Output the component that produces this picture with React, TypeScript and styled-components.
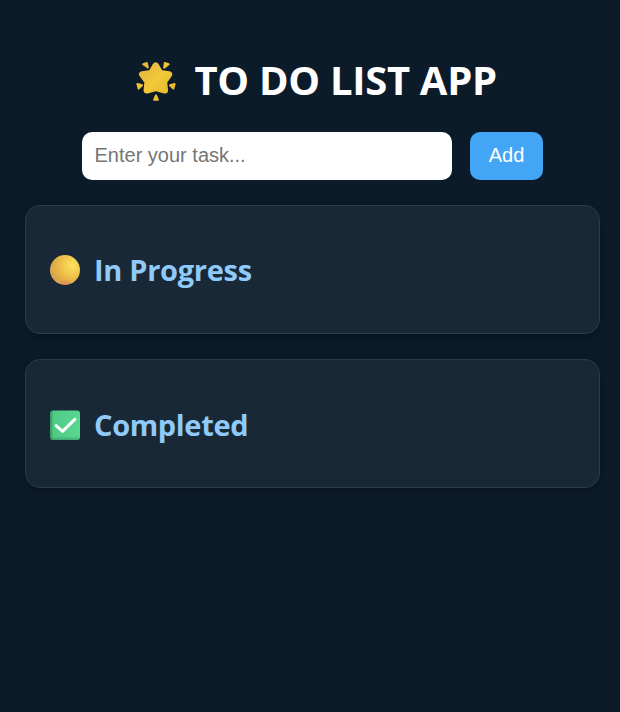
import React from "react";
import styled, { createGlobalStyle } from "styled-components";

const GlobalStyle = createGlobalStyle`
  * { box-sizing: border-box; }
  html, body { margin: 0; background: #0b1b29; }
  body { min-height: 100vh; font-family: "Open Sans", "Noto Sans", sans-serif; }
`;

const Page = styled.main`
  min-height: 100vh;
  padding: 53px 20px 0 25px;
  background: #0b1b29;
`;

const Title = styled.h1`
  display: flex;
  align-items: center;
  gap: 17.5px;
  height: 54px;
  margin: 0 0 25px 110px;
  color: #fff;
  font-size: 40px;
  font-weight: 700;
  line-height: 54px;
  white-space: nowrap;
`;

const TitleText = styled.span`
  letter-spacing: -0.3px;
`;

const TaskForm = styled.form`
  display: flex;
  justify-content: center;
  gap: 18px;
  margin-bottom: 25px;
`;

const TaskInput = styled.input`
  width: 370px;
  height: 48px;
  padding: 0 12.5px 2px;
  border: 0;
  border-radius: 10px;
  background: #fff;
  font: 20px "Liberation Sans", Arial, sans-serif;
  outline: none;
  &::placeholder { color: #757575; }
`;

const AddButton = styled.button`
  width: 73px;
  height: 48px;
  padding: 0 0 2px;
  border: 0;
  border-radius: 10px;
  background: #42a5f5;
  color: #fff;
  font: 20px "Liberation Sans", Arial, sans-serif;
`;

const Sections = styled.div`
  display: flex;
  flex-direction: column;
  gap: 25px;
`;

const Card = styled.section<{ $top?: number }>`
  display: flex;
  align-items: center;
  height: 129px;
  padding: ${(p) => p.$top ?? 0}px 24px 0;
  border: 1px solid #2e3b48;
  border-radius: 15px;
  background: #192836;
  box-shadow: 0 4px 10px rgba(0, 0, 0, 0.2);
`;

const CardTitle = styled.h2<{ $spacing: number }>`
  display: flex;
  align-items: center;
  gap: 14px;
  margin: 0;
  color: #90caf9;
  font-size: 29px;
  font-weight: 700;
  line-height: 40px;
  letter-spacing: ${(p) => p.$spacing}px;
`;

const StarIcon = () => (
  <svg width="42" height="42" viewBox="0 0 42 42">
    <defs>
      <linearGradient id="star" gradientUnits="userSpaceOnUse" x1="4" y1="4" x2="38" y2="38">
        <stop offset="0" stopColor="#e3b03d" />
        <stop offset="0.5" stopColor="#f0c93a" />
        <stop offset="1" stopColor="#e8b52c" />
      </linearGradient>
    </defs>
    <g fill="url(#star)" stroke="url(#star)" strokeLinejoin="round">
      <path strokeWidth="6.5" d="M20.7 6.6 25 14.2 34 15.4 28.9 22.6 29.8 31.3 20.8 28.9 11.8 31.3 12.7 22.6 7.3 15.4 16.4 14.2Z" />
      <path strokeWidth="2" d="M8.2 5.2 11.8 4 12.8 8.4ZM29.8 4 33.6 5.2 29.2 8.6ZM2.4 25 7 26.2 3.6 29.6ZM39.6 25 35 26.2 38.4 29.6ZM21 36.4 22.9 40.8H19.1Z" />
    </g>
  </svg>
);

const CircleIcon = () => (
  <svg width="30" height="30" viewBox="0 0 30 30">
    <defs>
      <radialGradient id="sun" cx="0.74" cy="0.34" r="0.8">
        <stop offset="0" stopColor="#ffe35d" />
        <stop offset="0.55" stopColor="#ebbc48" />
        <stop offset="0.8" stopColor="#dfaa46" />
        <stop offset="1" stopColor="#d3a062" />
      </radialGradient>
      <radialGradient id="sunBase" cx="0.5" cy="1.08" r="0.28">
        <stop offset="0" stopColor="#dc7b70" />
        <stop offset="1" stopColor="#dc7b70" stopOpacity="0" />
      </radialGradient>
    </defs>
    <circle cx="15" cy="15" r="15" fill="url(#sun)" />
    <circle cx="15" cy="15" r="15" fill="url(#sunBase)" />
  </svg>
);

const CheckIcon = () => (
  <svg width="30" height="30" viewBox="0 0 30 30">
    <defs>
      <linearGradient id="checkSide">
        <stop offset="0" stopColor="#36905f" />
        <stop offset="0.12" stopColor="#50cb86" />
        <stop offset="1" stopColor="#58d892" />
      </linearGradient>
      <linearGradient id="checkBase" x1="0" y1="0" x2="0" y2="1">
        <stop offset="0.88" stopColor="#379366" stopOpacity="0" />
        <stop offset="1" stopColor="#379366" stopOpacity="0.7" />
      </linearGradient>
    </defs>
    <rect y="0.5" width="30" height="29.5" rx="3" fill="url(#checkSide)" />
    <rect y="0.5" width="30" height="29.5" rx="3" fill="url(#checkBase)" />
    <path d="M6.2 15.7 12.5 21.3 24.8 9.4" fill="none" stroke="#fff" strokeWidth="3" strokeLinecap="round" strokeLinejoin="round" />
  </svg>
);

export default function App() {
  return (
    <>
      <GlobalStyle />
      <Page>
        <Title>
          <StarIcon />
          <TitleText>TO DO LIST APP</TitleText>
        </Title>
        <TaskForm onSubmit={(e) => e.preventDefault()}>
          <TaskInput placeholder="Enter your task..." />
          <AddButton>Add</AddButton>
        </TaskForm>
        <Sections>
          <Card>
            <CardTitle $spacing={-0.3}>
              <CircleIcon />
              In Progress
            </CardTitle>
          </Card>
          <Card $top={3}>
            <CardTitle $spacing={-0.35}>
              <CheckIcon />
              Completed
            </CardTitle>
          </Card>
        </Sections>
      </Page>
    </>
  );
}
